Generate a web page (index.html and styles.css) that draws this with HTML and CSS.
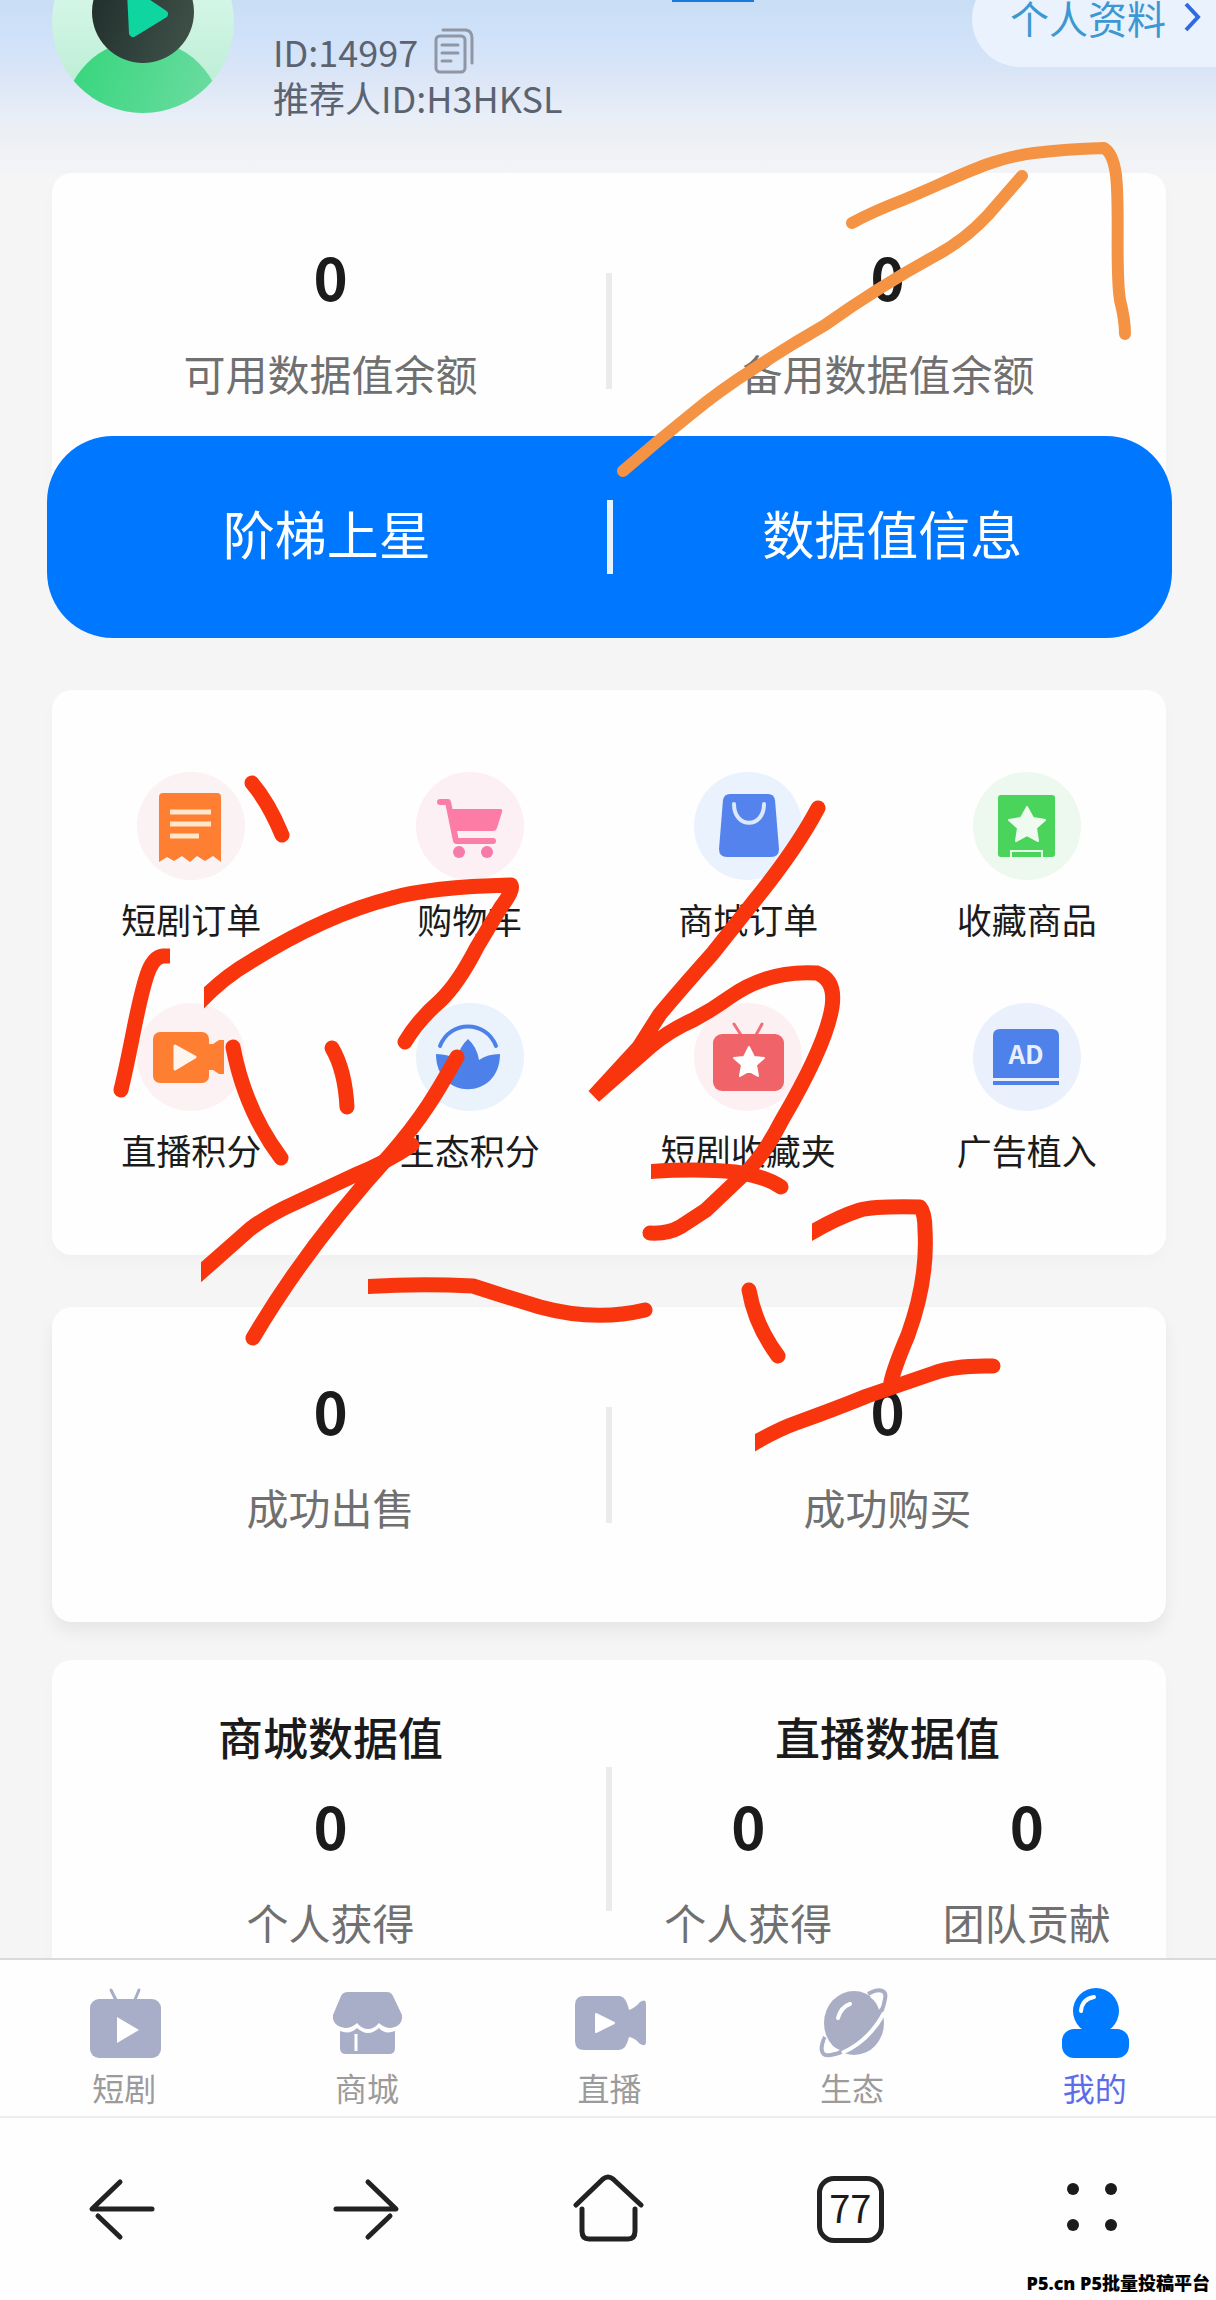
FILE: index.html
```html
<!DOCTYPE html>
<html lang="zh-CN">
<head>
    <meta charset="UTF-8">
    <meta name="viewport" content="width=device-width, initial-scale=1.0">
    <title>我的</title>
    <link rel="stylesheet" href="styles.css">
</head>
<body>
    <div class="app">
        <main class="content">
            <header class="profile">
                <svg class="avatar" viewBox="0 0 182 182">
                    <defs>
                        <linearGradient id="avatarBg" x1="0" y1="0" x2="0" y2="1">
                            <stop offset="0.4" stop-color="#d3f5e6"/>
                            <stop offset="1" stop-color="#b4eccf"/>
                        </linearGradient>
                        <linearGradient id="avatarBody" x1="0" y1="0.2" x2="1" y2="0.6">
                            <stop offset="0" stop-color="#35d67c"/>
                            <stop offset="1" stop-color="#74dca6"/>
                        </linearGradient>
                        <linearGradient id="avatarHead" x1="0" y1="0" x2="1" y2="0.4">
                            <stop offset="0" stop-color="#1d2b28"/>
                            <stop offset="1" stop-color="#3c4d46"/>
                        </linearGradient>
                        <clipPath id="avatarClip"><circle cx="91" cy="91" r="91"/></clipPath>
                    </defs>
                    <circle cx="91" cy="91" r="91" fill="url(#avatarBg)"/>
                    <circle cx="91" cy="188" r="79" fill="url(#avatarBody)" clip-path="url(#avatarClip)"/>
                    <circle cx="91" cy="81" r="51" fill="url(#avatarHead)"/>
                    <path d="M79 61L112 83L81 102Z" fill="#0fd6a0" stroke="#0fd6a0" stroke-width="8" stroke-linejoin="round"/>
                </svg>
                <div class="profile-info">
                    <div class="profile-line">
                        <span>ID:14997</span>
                        <button class="copy" aria-label="复制">
                            <svg viewBox="0 0 42 46" fill="none" stroke="#9096a4" stroke-width="3" stroke-linecap="round">
                                <rect x="2" y="8" width="29" height="36" rx="4"/>
                                <path d="M9 2H32Q38 3 38 10V35M8 17H24M8 25H24M8 33H17"/>
                            </svg>
                        </button>
                    </div>
                    <div class="profile-line">推荐人ID:H3HKSL</div>
                </div>
                <span class="marker"></span>
                <a class="profile-link" href="#">个人资料
                    <svg viewBox="0 0 20 32"><path d="M4 3L16 16L4 29" fill="none" stroke="#2f6be0" stroke-width="4"/></svg>
                </a>
            </header>

            <section class="card balance">
                <div class="stats">
                    <div class="stat"><b>0</b><span>可用数据值余额</span></div>
                    <i class="divider"></i>
                    <div class="stat"><b>0</b><span>备用数据值余额</span></div>
                </div>
            </section>

            <div class="actions">
                <button>阶梯上星</button>
                <i></i>
                <button>数据值信息</button>
            </div>

            <section class="card menu">
                <a href="#">
                    <svg viewBox="0 0 108 108">
                        <circle cx="54" cy="54" r="54" fill="#faf2f3"/>
                        <path d="M26 21H80Q84 21 84 25V90L76 84L68 89L60 84L53 90L45 84L37 89L30 85L22 90V25Q22 21 26 21Z" fill="#ff7f32"/>
                        <path d="M33 40H74M33 52H74M33 64H62" stroke="#ffe6c9" stroke-width="5"/>
                    </svg>
                    短剧订单
                </a>
                <a href="#">
                    <svg viewBox="0 0 108 108">
                        <circle cx="54" cy="54" r="54" fill="#fdf0f4"/>
                        <path d="M24 30H32L40 69H77" fill="none" stroke="#fa7fa8" stroke-width="6" stroke-linecap="round" stroke-linejoin="round"/>
                        <path d="M33 37H84Q87 37 86 40L81 56Q80 59 77 59H38Z" fill="#fd7ca5"/>
                        <circle cx="43" cy="80" r="6" fill="#f87aa8"/>
                        <circle cx="71" cy="80" r="6" fill="#f87aa8"/>
                    </svg>
                    购物车
                </a>
                <a href="#">
                    <svg viewBox="0 0 108 108">
                        <circle cx="54" cy="54" r="54" fill="#eaf2fd"/>
                        <path d="M36 22H74Q80 22 81 28L85 77Q85 85 77 85H33Q25 85 25 77L29 28Q30 22 36 22Z" fill="#5583ee"/>
                        <path d="M40 32C40 57 70 57 70 32" fill="none" stroke="#dce9fd" stroke-width="4" stroke-linecap="round"/>
                    </svg>
                    商城订单
                </a>
                <a href="#">
                    <svg viewBox="0 0 108 108">
                        <circle cx="54" cy="54" r="54" fill="#edf9ef"/>
                        <rect x="25" y="23" width="57" height="62" rx="3" fill="#4bd45b"/>
                        <path d="M54 35L60 46L72 48L63 56L65 69L54 63L43 69L45 56L36 48L48 46Z" fill="#effbf0" stroke="#effbf0" stroke-width="2" stroke-linejoin="round"/>
                        <path d="M38 85V79H69V85" fill="none" stroke="#e2f8e4" stroke-width="2"/>
                    </svg>
                    收藏商品
                </a>
                <a href="#">
                    <svg viewBox="0 0 108 108">
                        <circle cx="54" cy="54" r="54" fill="#fdf2f3"/>
                        <rect x="16" y="29" width="56" height="51" rx="7" fill="#ff7f32"/>
                        <path d="M70 41H76L82 37H87V71H82L76 67H70Z" fill="#ff7f32"/>
                        <path d="M38 43L58 54L38 66Z" fill="#fff5ef" stroke="#fff5ef" stroke-width="3" stroke-linejoin="round"/>
                    </svg>
                    直播积分
                </a>
                <a href="#">
                    <svg viewBox="0 0 108 108">
                        <circle cx="54" cy="54" r="54" fill="#eaf2fc"/>
                        <path d="M24 43C34 17 70 17 80 43" fill="none" stroke="#4d80e8" stroke-width="4" stroke-linecap="round"/>
                        <path d="M20 51Q33 51 41 57Q43 44 52 36Q61 44 63 57Q71 51 84 51C84 98 20 98 20 51Z" fill="#4d80e8"/>
                    </svg>
                    生态积分
                </a>
                <a href="#">
                    <svg viewBox="0 0 108 108">
                        <circle cx="54" cy="54" r="54" fill="#fdf0f3"/>
                        <path d="M40 21L47 32M68 21L62 32" stroke="#ee7078" stroke-width="3" stroke-linecap="round"/>
                        <rect x="19" y="31" width="71" height="57" rx="9" fill="#f06368"/>
                        <path d="M55 44L60 54L70 55L62 62L64 73L55 68L46 73L48 62L40 55L50 54Z" fill="#fff" stroke="#fff" stroke-width="2" stroke-linejoin="round"/>
                    </svg>
                    短剧收藏夹
                </a>
                <a href="#">
                    <svg viewBox="0 0 108 108">
                        <circle cx="54" cy="54" r="54" fill="#eaf1fd"/>
                        <path d="M27 26H79Q86 26 86 33V75H20V33Q20 26 27 26Z" fill="#4f81ea"/>
                        <path d="M20 80H86" stroke="#4f81ea" stroke-width="4"/>
                        <text class="ad" x="53" y="61" text-anchor="middle">AD</text>
                    </svg>
                    广告植入
                </a>
            </section>

            <section class="card deals">
                <div class="stats">
                    <div class="stat"><b>0</b><span>成功出售</span></div>
                    <i class="divider"></i>
                    <div class="stat"><b>0</b><span>成功购买</span></div>
                </div>
            </section>

            <section class="card values">
                <div class="group">
                    <h2>商城数据值</h2>
                    <div class="stats">
                        <div class="stat"><b>0</b><span>个人获得</span></div>
                    </div>
                </div>
                <i class="divider tall"></i>
                <div class="group">
                    <h2>直播数据值</h2>
                    <div class="stats">
                        <div class="stat"><b>0</b><span>个人获得</span></div>
                        <div class="stat"><b>0</b><span>团队贡献</span></div>
                    </div>
                </div>
            </section>
        </main>

        <nav class="tabs">
            <a href="#">
                <svg viewBox="0 0 80 80">
                    <path d="M27 6L33 18M55 6L50 18" stroke="#a9aec8" stroke-width="3" stroke-linecap="round"/>
                    <rect x="6" y="15" width="71" height="59" rx="9" fill="#a9aec8"/>
                    <path d="M33 33L55 46L33 59Z" fill="#fff"/>
                </svg>
                短剧
            </a>
            <a href="#">
                <svg viewBox="0 0 80 80">
                    <path d="M21 8H60Q64 8 66 12L75 31Q76 42 64 44Q57 44 52 39Q47 45 41 45Q35 45 30 39Q25 44 18 44Q5 42 6 31L14 12Q16 8 21 8Z" fill="#a9aec8"/>
                    <path d="M13 47Q23 51 30 44Q41 54 52 44Q58 51 68 47V64Q68 70 62 70H19Q13 70 13 64Z" fill="#a9aec8"/>
                    <path d="M29 50V67" stroke="#fff" stroke-width="3"/>
                </svg>
                商城
            </a>
            <a href="#">
                <svg viewBox="0 0 80 80">
                    <path d="M15 12H50Q57 12 60 26Q66 24 71 18Q77 14 77 20V58Q77 63 71 60Q66 54 60 53Q57 66 50 66H15Q6 66 6 57V21Q6 12 15 12Z" fill="#a9aec8"/>
                    <path d="M27 30L45 39L27 48Z" fill="#fff" stroke="#fff" stroke-width="2" stroke-linejoin="round"/>
                </svg>
                直播
            </a>
            <a href="#">
                <svg viewBox="0 0 80 80">
                    <ellipse cx="42" cy="39" rx="30" ry="32" fill="#a9aec5"/>
                    <path d="M56 10C69 3 75 7 73 15C72 20 71 24 69 28" fill="none" stroke="#a9aec5" stroke-width="4"/>
                    <path d="M13 53C7 65 9 73 19 71C24 70 28 69 31 67" fill="none" stroke="#a9aec5" stroke-width="4"/>
                    <path d="M58 13Q68 9 70 15Q71 20 67 26Q65 18 58 13ZM14 54Q11 63 14 67Q19 70 28 66Q19 63 14 54Z" fill="#fff"/>
                    <path d="M72 29Q57 57 30 69" fill="none" stroke="#fff" stroke-width="4"/>
                    <path d="M26 34Q29 23 38 20" fill="none" stroke="#fff" stroke-width="4" stroke-linecap="round"/>
                </svg>
                生态
            </a>
            <a class="active" href="#">
                <svg viewBox="0 0 80 80">
                    <circle cx="41" cy="27" r="23" fill="#007aff"/>
                    <path d="M28 42H54V52H28Z" fill="#007aff"/>
                    <rect x="7" y="45" width="67" height="29" rx="12" fill="#007aff"/>
                    <path d="M26 27Q27 15 39 13" fill="none" stroke="#fff" stroke-width="4" stroke-linecap="round"/>
                </svg>
                我的
            </a>
        </nav>

        <nav class="browser">
            <button aria-label="后退">
                <svg viewBox="0 0 72 72"><path d="M33 9L5 36H65M11 43L33 64"/></svg>
            </button>
            <button aria-label="前进">
                <svg viewBox="0 0 72 72"><path d="M38 9L66 36H6M60 43L38 64"/></svg>
            </button>
            <button aria-label="主页">
                <svg viewBox="0 0 72 72"><path d="M3 32L30 6Q35 2 40 6L68 32M9 36V58Q9 66 16 66H55Q62 66 62 58V36"/></svg>
            </button>
            <button aria-label="标签页"><span class="count">77</span></button>
            <button aria-label="菜单">
                <svg class="dots" viewBox="0 0 72 72">
                    <circle cx="14" cy="16" r="6"/><circle cx="52" cy="16" r="6"/>
                    <circle cx="14" cy="52" r="6"/><circle cx="52" cy="52" r="6"/>
                </svg>
            </button>
        </nav>
    </div>

    <div class="watermark">P5.cn P5批量投稿平台</div>

    <!-- hand drawn marks over the page -->
    <svg class="marks" viewBox="0 0 1216 2300">
        <defs>
            <clipPath id="cut1"><path d="M204 800H600V1100H204Z"/></clipPath>
            <clipPath id="cut2"><path d="M100 900H170V1120H100Z"/></clipPath>
            <clipPath id="cut3"><path d="M201 1100H430V1300H201Z"/></clipPath>
            <clipPath id="cut4"><path d="M368 1200H700V1400H368Z"/></clipPath>
            <clipPath id="cut5"><path d="M651 1100H900V1250H651Z"/></clipPath>
            <clipPath id="cut6"><path d="M812 1150H1000V1450H812Z"/></clipPath>
            <clipPath id="cut7"><path d="M755 1300H1100V1500H755Z"/></clipPath>
        </defs>
        <g class="orange">
            <path d="M852 223C870 213 890 205 903 200C935 187 960 174 988 164Q1015 155 1034 153Q1066 149 1104 148Q1113 153 1116 175C1120 210 1115 270 1120 300Q1125 320 1125 334"/>
            <path d="M1022 176L988 215Q965 240 935 256Q880 286 825 325Q790 345 755 368Q720 390 690 415Q655 443 623 471"/>
        </g>
        <g class="red">
            <path d="M252 783Q269 803 282 835"/>
            <path clip-path="url(#cut1)" d="M196 1006Q222 978 250 962Q325 915 392 898Q430 887 511 885Q514 890 501 907L477 947Q458 984 440 1001Q418 1020 405 1042"/>
            <path clip-path="url(#cut2)" d="M174 956H163Q153 957 147 975C137 1005 133 1040 121 1090"/>
            <path d="M233 1047Q245 1110 281 1158"/>
            <path d="M332 1048Q345 1070 347 1107"/>
            <path d="M457 1057C440 1087 425 1115 390 1155C340 1210 290 1275 253 1338"/>
            <path clip-path="url(#cut3)" d="M412 1145Q385 1163 355 1175L295 1203Q270 1214 250 1229L190 1282"/>
            <path clip-path="url(#cut4)" d="M362 1287Q416 1283 473 1286Q510 1298 540 1307Q595 1322 645 1310"/>
            <path class="sharp" d="M818 808Q797 848 755 900L713 953Q680 990 660 1014L639 1047L594 1096L651 1046Q670 1030 693 1020Q712 1010 730 997Q768 970 817 973Q836 980 832 1007Q826 1045 782 1120Q763 1157 745 1173L706 1210L680 1227Q668 1234 650 1233"/>
            <path clip-path="url(#cut5)" d="M642 1172Q698 1168 735 1172Q765 1176 781 1187"/>
            <path clip-path="url(#cut6)" d="M804 1237Q835 1218 860 1210Q875 1206 920 1207Q925 1213 925 1230Q928 1280 908 1335Q894 1368 891 1382"/>
            <path d="M749 1290Q755 1325 778 1356"/>
            <path clip-path="url(#cut7)" d="M746 1448Q776 1430 796 1423Q835 1409 867 1396L934 1373Q955 1365 993 1366"/>
        </g>
    </svg>
</body>
</html>
```

FILE: styles.css
```css
* {
    box-sizing: border-box;
}

body {
    position: relative;
    margin: 0;
    font-family: 'Noto Sans CJK SC', sans-serif;
    color: #1b1b1b;
    background: #f5f5f5;
}

a {
    color: inherit;
    text-decoration: none;
}

button {
    padding: 0;
    border: none;
    background: none;
    color: inherit;
    font-family: inherit;
    cursor: pointer;
}

svg {
    display: block;
}

.app {
    display: flex;
    flex-direction: column;
    height: 100vh;
}

.content {
    flex: 1;
    overflow: hidden;
}

/* Profile header */
.profile {
    display: flex;
    align-items: flex-end;
    height: 173px;
    padding: 0 0 53px 52px;
    overflow: hidden;
    background: linear-gradient(#c8def5, #d1e2f9 45px, #dce6f6 80px, #e8eef8 115px, #edf0f3 135px, #f4f4f7);
}

.avatar {
    flex: none;
    width: 182px;
    height: 182px;
    margin-bottom: 7px;
}

.profile-info {
    flex: 1;
    margin-left: 39px;
    font-size: 36px;
    line-height: 46px;
    color: #5c6370;
}

.profile-line {
    display: flex;
    align-items: center;
    gap: 16px;
}

.copy svg {
    width: 42px;
    height: 46px;
}

.marker {
    width: 82px;
    height: 20px;
    margin: 0 218px 118px 0;
    background: #1878dc;
}

.profile-link {
    display: flex;
    align-items: center;
    gap: 16px;
    height: 96px;
    margin-bottom: 53px;
    padding: 0 14px 4px 38px;
    border-radius: 48px 0 0 48px;
    background: #e9f2fd;
    font-size: 39px;
    color: #3c97d3;
}

.profile-link svg {
    width: 20px;
    height: 32px;
}

/* Cards */
.card {
    margin: 0 50px 52px 52px;
    border-radius: 20px;
    background: #fefefe;
    box-shadow: 0 8px 16px rgba(0, 0, 0, 0.02);
}

.stats {
    display: flex;
    align-items: flex-start;
}

.stat {
    flex: 1;
    display: flex;
    flex-direction: column;
    align-items: center;
    gap: 43px;
}

.stat b {
    font-size: 58px;
    line-height: 60px;
}

.stat span {
    font-size: 42px;
    line-height: 48px;
    color: #707070;
}

.divider {
    width: 6px;
    height: 116px;
    margin: 27px -3px 0;
    background: #ebebeb;
}

.divider.tall {
    height: 144px;
    margin-top: 56px;
}

.balance {
    margin-bottom: 0;
    padding: 73px 0 141px;
}

.deals {
    margin-bottom: 38px;
    padding: 73px 0 91px;
    box-shadow: 0 10px 16px rgba(0, 0, 0, 0.06);
}

.values {
    display: flex;
    margin-bottom: 0;
    padding: 51px 0 48px;
}

.group {
    flex: 1;
}

.group h2 {
    margin: 0 0 32px;
    font-size: 45px;
    font-weight: 500;
    line-height: 52px;
    text-align: center;
}

/* Blue bar */
.actions {
    position: relative;
    display: flex;
    align-items: center;
    height: 202px;
    margin: -102px 44px 52px 47px;
    border-radius: 66px;
    background: #0077ff;
    color: #fff;
}

.actions button {
    flex: 1;
    align-self: stretch;
    padding-bottom: 10px;
    font-size: 52px;
}

.actions i {
    width: 6px;
    height: 74px;
    background: #e6f2ff;
}

/* Menu */
.menu {
    display: grid;
    grid-template-columns: repeat(4, 1fr);
    row-gap: 62px;
    padding: 82px 0 83px;
}

.menu a {
    display: flex;
    flex-direction: column;
    align-items: center;
    gap: 17px;
    font-size: 35px;
    line-height: 44px;
}

.menu svg {
    width: 108px;
    height: 108px;
}

.ad {
    font-size: 26px;
    font-weight: bold;
    fill: #e8f0ff;
}

/* Bottom tabs */
.tabs {
    display: flex;
    padding: 24px 0 11px 3px;
    border-top: 2px solid #dadada;
    background: #fefefe;
}

.tabs a {
    flex: 1;
    display: flex;
    flex-direction: column;
    align-items: center;
    gap: 5px;
    font-size: 32px;
    line-height: 36px;
    color: #9b9b9b;
}

.tabs .active {
    color: #5d6cea;
}

.tabs svg {
    width: 80px;
    height: 80px;
}

/* Browser toolbar */
.browser {
    display: flex;
    padding: 55px 0 55px 2px;
    border-top: 2px solid #ededed;
    background: #fefefe;
}

.browser button {
    flex: 1;
    display: flex;
    justify-content: center;
}

.browser svg {
    width: 72px;
    height: 72px;
    fill: none;
    stroke: #222;
    stroke-width: 5px;
    stroke-linecap: round;
    stroke-linejoin: round;
}

.browser .dots {
    fill: #1b1b1b;
    stroke: none;
}

.count {
    width: 67px;
    height: 67px;
    margin: 3px 3px 2px 0;
    border: 5px solid #222;
    border-radius: 17px;
    font-size: 38px;
    line-height: 51px;
    text-align: center;
}

.watermark {
    position: absolute;
    right: 6px;
    bottom: 5px;
    font-family: 'Noto Sans', 'Noto Sans CJK SC', sans-serif;
    font-size: 18px;
    font-weight: 900;
    line-height: 24px;
    color: #000;
}

.marks {
    position: absolute;
    top: 0;
    left: 0;
    width: 100%;
    pointer-events: none;
    fill: none;
    stroke-linecap: round;
    stroke-linejoin: round;
}

.orange {
    stroke: #f59345;
    stroke-width: 12px;
}

.red {
    stroke: #f9350e;
    stroke-width: 15px;
}

.sharp {
    stroke-linejoin: miter;
}
```
